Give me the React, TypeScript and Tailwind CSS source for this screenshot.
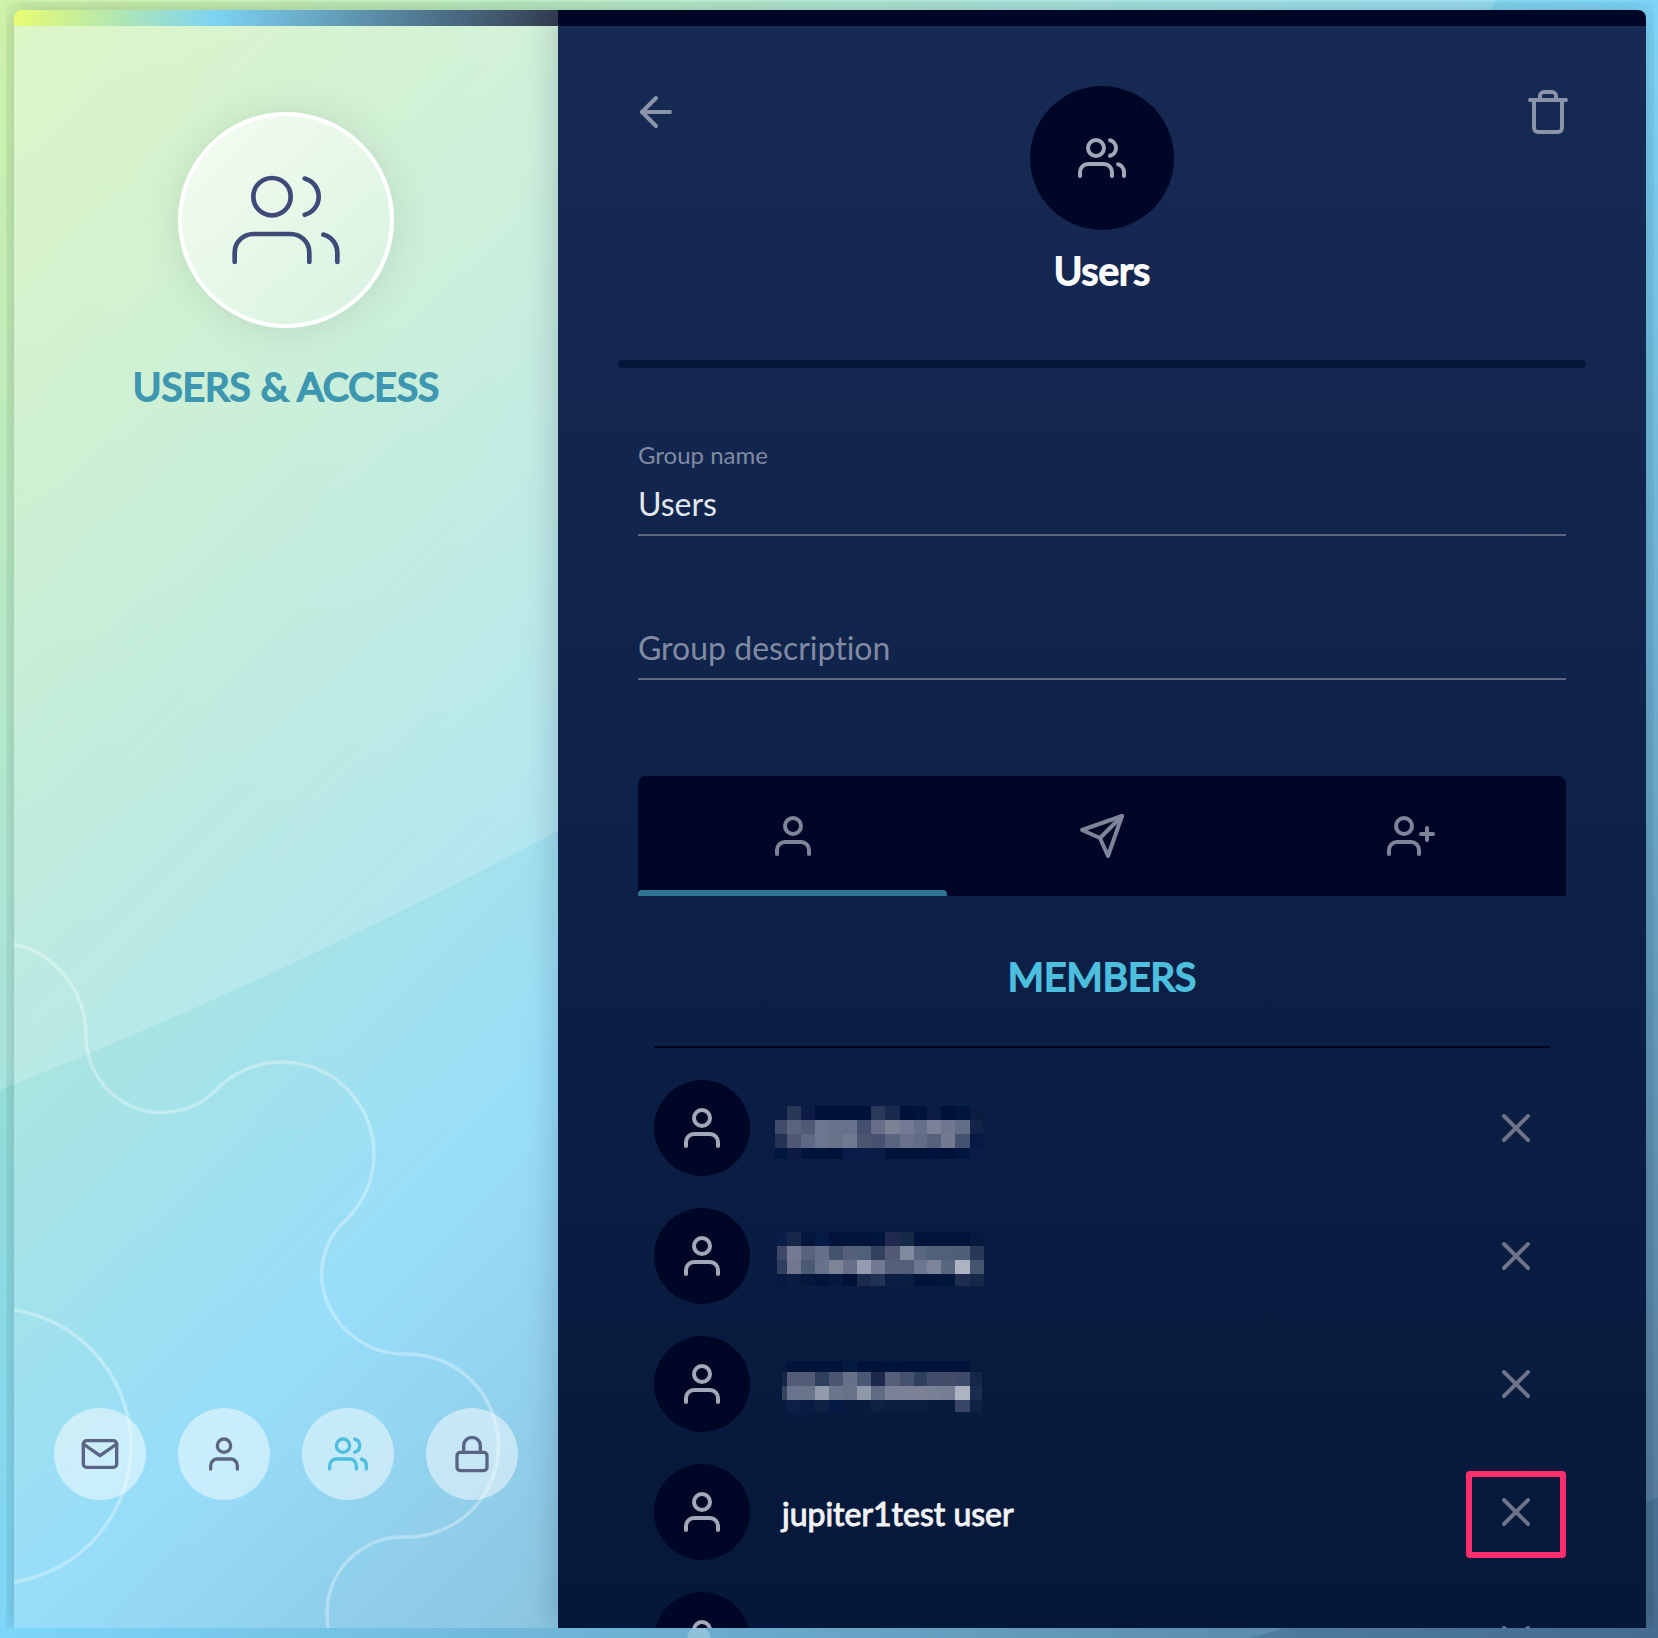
import React, { useState } from "react";
import {
  FiArrowLeft,
  FiLock,
  FiMail,
  FiSend,
  FiTrash,
  FiUser,
  FiUserPlus,
  FiUsers,
  FiX,
} from "react-icons/fi";

type Mosaic = { xs: number[]; ys: number[]; rows: string[][] };

type Member = { id: number; name?: string; mosaic?: Mosaic; highlighted?: boolean };

const N = "none";

const MEMBERS: Member[] = [
  {
    id: 1,
    mosaic: {
      xs: [25, 37, 51, 65, 79, 93, 107, 121, 135, 150, 164, 177, 191, 205, 220, 233],
      ys: [26, 40, 54, 68, 79],
      rows: [
        [N, "#2a3858", "#0c1c46", "#001239", "#001239", "#001239", "#001239", "#2b3857", "#1a2a4e", "#001138", "#00153c", "#0d1c44", "#001139", "#00153c", "#0a1c40"],
        ["#414b6a", "#59647e", "#505a77", "#6c7690", "#68728c", "#677189", "#445070", "#686e88", "#7a8294", "#727a94", "#667089", "#7a8199", "#6f7790", "#646d88", "#142348"],
        ["#233355", "#4e5875", "#5e6a85", "#6c768e", "#687289", "#6f7990", "#4a5572", "#47506f", "#586480", "#6a7089", "#646d86", "#56627c", "#73798f", "#445270", "#071a45"],
        ["#00163d", "#0d1b43", "#001539", "#001338", "#001238", "#0a1c4a", "#0a1c48", "#0a1c48", "#001339", "#001339", "#001339", "#001440", "#001238", "#001540", "#0a1c48"],
      ],
    },
  },
  {
    id: 2,
    mosaic: {
      xs: [27, 37, 51, 65, 79, 93, 107, 121, 135, 150, 164, 177, 191, 205, 220, 234],
      ys: [24, 38, 52, 66, 78],
      rows: [
        ["#0c1e4a", "#162648", "#04163c", "#051a44", "#001339", "#001339", "#001339", "#00163c", "#1f2a4e", "#152a47", "#00133a", "#00133a", "#00133a", "#00133a", "#05193f"],
        ["#3f4868", "#747a94", "#59637d", "#657189", "#44526e", "#55617c", "#51607a", "#32425f", "#525a76", "#808b9f", "#59667f", "#52607a", "#525f79", "#515e78", "#273956"],
        ["#2f3e5e", "#72778f", "#4b5a73", "#66728b", "#7f8398", "#676f89", "#959caf", "#717a92", "#555f7b", "#535e78", "#6b7690", "#7b8499", "#57657f", "#adb3c0", "#465470"],
        ["#051a42", "#0b1c42", "#05183c", "#00143b", "#05183e", "#001138", "#1b294f", "#203352", "#0b1d43", "#0a1e42", "#001339", "#001339", "#00163c", "#1f2e50", "#162848"],
      ],
    },
  },
  {
    id: 3,
    mosaic: {
      xs: [32, 37, 51, 65, 79, 93, 107, 121, 135, 150, 164, 177, 191, 205, 220, 232],
      ys: [25, 36, 50, 64, 76],
      rows: [
        ["#07193e", "#001339", "#001339", "#001339", "#001339", "#051a40", "#001339", "#001339", "#00153c", "#001339", "#001339", "#001339", "#001339", "#001339", N],
        ["#16254a", "#535d77", "#535c76", "#2e3f5d", "#4b5571", "#667089", "#4a5973", "#1c284c", "#555f7a", "#445270", "#2e405e", "#414d6b", "#414d69", "#3d4a68", "#16254a"],
        ["#36445f", "#6a748c", "#69748b", "#929bac", "#6a758c", "#677187", "#8f98a9", "#5f6c83", "#7b8298", "#7b8197", "#7d8297", "#788095", "#757e93", "#adb3c0", "#1c2b50"],
        [N, "#0e1f45", "#081c42", "#0e2142", "#031844", N, N, "#0e2142", "#0a1e42", "#0a1e42", "#0a1e42", N, N, "#384466", "#102146"],
      ],
    },
  },
  { id: 4, name: "jupiter1test user", highlighted: true },
  { id: 5 },
];

const NAV = [
  { label: "Mail", Icon: FiMail },
  { label: "User", Icon: FiUser },
  { label: "Groups", Icon: FiUsers },
  { label: "Security", Icon: FiLock },
];

const TABS = [
  { label: "Members", Icon: FiUser },
  { label: "Messages", Icon: FiSend },
  { label: "Add member", Icon: FiUserPlus },
];

function RedactedName({ mosaic }: { mosaic: Mosaic }) {
  const { xs, ys, rows } = mosaic;
  return (
    <svg width="240" height="96" viewBox="0 0 240 96" shapeRendering="crispEdges" role="img" aria-label="Hidden name">
      {rows.map((row, r) =>
        row.map((fill, c) => (
          <rect key={`${r}-${c}`} x={xs[c]} y={ys[r]} width={xs[c + 1] - xs[c]} height={ys[r + 1] - ys[r]} fill={fill} />
        )),
      )}
    </svg>
  );
}

function Backdrop() {
  return (
    <svg className="absolute inset-0 h-full w-full" viewBox="0 0 1658 1638" preserveAspectRatio="none" aria-hidden="true">
      <path d="M0 0H1496C1380 200 900 650 558 831Q283 977 0 1090Z" fill="#fff" fillOpacity="0.18" />
      <path d="M1250 1638Q1470 1575 1658 1497V1638Z" fill="#1e5080" fillOpacity="0.25" />
      <circle cx="699" cy="1638" r="11.5" fill="#fff" fillOpacity="0.25" />
    </svg>
  );
}

function Waves() {
  return (
    <svg className="absolute bottom-0 left-0 w-full" viewBox="14 900 544 728" fill="none" stroke="#fff" strokeOpacity="0.32" strokeWidth="3.5" aria-hidden="true">
      <path d="M10 943A93.5 93.5 0 0 1 86 1035A76 76 0 0 0 216 1090A92 92 0 0 1 282 1062A92 92 0 0 1 374 1154A92 92 0 0 1 346 1220A73 73 0 0 0 329 1306A83 83 0 0 0 398 1354H407A91.5 91.5 0 0 1 407 1537H403A76 76 0 0 0 327 1613Q327 1622 329 1632" />
      <circle cx="-6.5" cy="1446" r="137.5" />
    </svg>
  );
}

function Sidebar() {
  return (
    <aside className="flex w-1/3 flex-col">
      <div className="h-4 shrink-0 bg-[linear-gradient(100deg,#eafc70_0%,#b4e8ae_18%,#7dd3f3_37%,#333c50_100%)]" />
      <div className="relative flex flex-1 flex-col items-center bg-linear-to-b from-white/35 via-white/22 to-white/20 pt-[86px] pb-32">
        <Waves />
        <div className="flex size-[216px] items-center justify-center rounded-full border-4 border-white bg-[linear-gradient(135deg,rgba(255,255,255,0.75),rgba(255,255,255,0.2))] text-[#3e4b78] shadow-[0_0_40px_rgba(0,0,0,0.1)]">
          <FiUsers size={112} strokeWidth={1} />
        </div>
        <h1 className="mt-[34px] text-[39px] leading-[48px] font-normal whitespace-nowrap text-[#3e97b1] [-webkit-text-stroke:2px_currentColor]">USERS &amp; ACCESS</h1>
        <nav className="relative mt-auto flex gap-8">
          {NAV.map(({ label, Icon }) => (
            <button
              key={label}
              type="button"
              aria-label={label}
              className={
                label === "Groups"
                  ? "flex size-[92px] items-center justify-center rounded-full bg-white/48 text-[#4dbfde]"
                  : "flex size-[92px] items-center justify-center rounded-full bg-white/48 text-[#5b6484]"
              }
            >
              <Icon size={40} />
            </button>
          ))}
        </nav>
      </div>
    </aside>
  );
}

function MemberRow({ member }: { member: Member }) {
  return (
    <li className="flex h-24 items-center pr-2.5">
      <span className="flex size-24 shrink-0 items-center justify-center rounded-full bg-[#000626] text-[#a3a8b9]">
        <FiUser size={48} />
      </span>
      {member.mosaic && <RedactedName mosaic={member.mosaic} />}
      {member.name && (
        <span className="ml-8 pt-1 text-[32px] leading-10 text-[#f1f2f5] [-webkit-text-stroke:1px_currentColor]">{member.name}</span>
      )}
      <button type="button" aria-label="Remove member" className="relative ml-auto size-12 shrink-0 text-[#6d7388]">
        <FiX size={48} />
        {member.highlighted && (
          <span className="absolute -inset-x-[26px] -top-[17px] -bottom-[22px] rounded-sm border-6 border-[#ff2e6c]" />
        )}
      </button>
    </li>
  );
}

export default function App() {
  const [name, setName] = useState("Users");
  const [description, setDescription] = useState("");

  return (
    <div className="relative flex h-screen overflow-hidden bg-[linear-gradient(135deg,#c2ef95_0%,#7dd5f9_50%,#527493_100%)] pt-0.5 pr-1 pb-2.5 pl-1.5 font-['Lato',sans-serif] [font-variant-ligatures:none]">
      <Backdrop />
      <div className="relative flex flex-1 overflow-hidden px-2 pt-2">
        <div className="flex flex-1 rounded-t-lg shadow-[0_0_24px_rgba(0,0,0,0.2)]">
          <div className="flex flex-1 overflow-hidden rounded-t-lg">
            <Sidebar />
            <main className="relative flex w-2/3 flex-col shadow-[0_0_32px_rgba(0,20,60,0.22)]">
              <div className="h-4 shrink-0 bg-[#000626]" />
              <div className="min-h-0 flex-1 overflow-hidden bg-[linear-gradient(180deg,#172a54_0%,#10244c_36%,#0b1f46_64%,#051839_100%)] pt-[60px]">
                <header className="flex items-start justify-between px-[74px]">
                  <button type="button" aria-label="Back" className="mt-0.5 text-[#8b93a9]">
                    <FiArrowLeft size={48} />
                  </button>
                  <div className="flex flex-col items-center">
                    <span className="flex size-36 items-center justify-center rounded-full bg-[#000626] text-[#a3a8b9]">
                      <FiUsers size={48} />
                    </span>
                    <h2 className="mt-4 text-[39px] leading-[48px] font-normal text-[#fbfbfb] [-webkit-text-stroke:2px_currentColor]">Users</h2>
                  </div>
                  <button type="button" aria-label="Delete group" className="mt-0.5 text-[#8b93a9]">
                    <FiTrash size={48} />
                  </button>
                </header>

                <div className="mx-[60px] mt-[66px] h-2 rounded-full bg-[#05183c]" />

                <div className="px-20">
                  <label htmlFor="group-name" className="mt-[73px] block text-2xl leading-7 text-[#808aa2]">
                    Group name
                  </label>
                  <input
                    id="group-name"
                    value={name}
                    onChange={(e) => setName(e.target.value)}
                    className="mt-[15px] block w-full border-b-2 border-[#5d6782] pb-2.5 text-[32px] leading-10 text-[#e4e7ee] outline-none"
                  />
                  <input
                    aria-label="Group description"
                    placeholder="Group description"
                    value={description}
                    onChange={(e) => setDescription(e.target.value)}
                    className="mt-[92px] block w-full border-b-2 border-[#5d6782] pb-2.5 text-[32px] leading-10 text-[#e4e7ee] outline-none placeholder:text-[#808aa2]"
                  />

                  <div role="tablist" className="mt-24 grid h-[120px] grid-cols-3 rounded-t-lg bg-[#000626]">
                    {TABS.map(({ label, Icon }, i) => (
                      <button key={label} type="button" role="tab" aria-selected={i === 0} aria-label={label} className="relative flex items-center justify-center text-[#7f8499]">
                        <Icon size={48} />
                        {i === 0 && <span className="absolute inset-x-0 bottom-0 h-1.5 rounded-t bg-[#2e7591]" />}
                      </button>
                    ))}
                  </div>

                  <h3 className="mt-14 text-center text-[39px] leading-[48px] font-normal text-[#4dbfde] [-webkit-text-stroke:2px_currentColor]">MEMBERS</h3>
                  <div className="mx-4 mt-[46px] border-t-2 border-[#00041f] pt-8">
                    <ul className="flex flex-col gap-8">
                      {MEMBERS.map((m) => (
                        <MemberRow key={m.id} member={m} />
                      ))}
                    </ul>
                  </div>
                </div>
              </div>
            </main>
          </div>
        </div>
      </div>
    </div>
  );
}
